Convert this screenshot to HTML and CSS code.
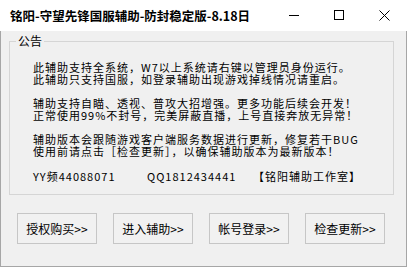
FILE: index.html
```html
<!DOCTYPE html>
<html lang="zh-CN">
<head>
    <meta charset="UTF-8">
    <title>铭阳-守望先锋国服辅助-防封稳定版-8.18日</title>
    <link rel="stylesheet" href="styles.css">
</head>
<body>
    <div class="window">
        <div class="titlebar">
            <span class="title">铭阳-守望先锋国服辅助-防封稳定版-8.18日</span>
            <div class="controls">
                <span class="ctl">
                    <svg width="11" height="11" viewBox="0 0 11 11"><path d="M0 5.5h10" stroke="#000" stroke-width="1"/></svg>
                </span>
                <span class="ctl">
                    <svg width="11" height="11" viewBox="0 0 11 11"><rect x="0.5" y="0.5" width="9" height="9" fill="none" stroke="#000" stroke-width="1"/></svg>
                </span>
                <span class="ctl">
                    <svg width="11" height="11" viewBox="0 0 11 11"><path d="M0.5 0.5l10 10M10.5 0.5l-10 10" stroke="#000" stroke-width="1"/></svg>
                </span>
            </div>
        </div>
        <div class="client">
            <fieldset class="notice">
                <legend>公告</legend>
                <div class="notice-body">
                    <p>此辅助支持全系统，W7以上系统请右键以管理员身份运行。<br>此辅助只支持国服，如登录辅助出现游戏掉线情况请重启。</p>
                    <p>辅助支持自瞄、透视、普攻大招增强。更多功能后续会开发！<br>正常使用99%不封号，完美屏蔽直播，上号直接奔放无异常！</p>
                    <p>辅助版本会跟随游戏客户端服务数据进行更新，修复若干BUG<br>使用前请点击［检查更新］，以确保辅助版本为最新版本！</p>
                    <div class="contact">
                        <span class="yy">YY频44088071</span>
                        <span class="qq">QQ1812434441</span>
                        <span class="studio">【铭阳辅助工作室】</span>
                    </div>
                </div>
            </fieldset>
            <div class="actions">
                <button class="btn">授权购买&gt;&gt;</button>
                <button class="btn">进入辅助&gt;&gt;</button>
                <button class="btn">帐号登录&gt;&gt;</button>
                <button class="btn">检查更新&gt;&gt;</button>
            </div>
        </div>
    </div>
</body>
</html>
```

FILE: styles.css
```css
* {
    box-sizing: border-box;
}
body {
    margin: 0;
    font-family: "Noto Sans CJK SC", "Noto Sans", sans-serif;
    color: #000;
}
.window {
    width: 407px;
    height: 267px;
    display: flex;
    flex-direction: column;
    background: #fff;
}
.titlebar {
    height: 31px;
    display: flex;
    align-items: center;
    background: #fff;
}
.titlebar .title {
    padding-left: 10px;
    font-size: 12.5px;
    font-weight: bold;
    line-height: 15px;
    flex: 1;
}
.titlebar .controls {
    display: flex;
    align-items: center;
    height: 100%;
}
.titlebar .ctl {
    width: 45px;
    height: 100%;
    display: flex;
    align-items: center;
    justify-content: center;
}
.titlebar .ctl svg {
    display: block;
}
.client {
    flex: 1;
    background: #f0f0f0;
    border: 1px solid #a6a6a6;
    border-top: none;
    display: flex;
    flex-direction: column;
}
.notice {
    margin: 4px 12px 0 8px;
    padding: 0 0 12px 6px;
    border: 1px solid #d5d5d5;
    min-width: 0;
}
.notice legend {
    padding: 0 2px;
    font-size: 12px;
    line-height: 12px;
}
.notice-body {
    margin: 14px 0 0 17px;
    font-size: 11px;
    letter-spacing: 1px;
    line-height: 12px;
    white-space: nowrap;
}
.notice-body p {
    margin: 0 0 12px;
}
.contact {
    display: flex;
    margin-top: 13px;
}
.contact .yy {
    width: 114px;
}
.contact .qq {
    width: 106px;
}
.actions {
    display: flex;
    gap: 16px;
    margin: 18px 0 0 16px;
}
.btn {
    width: 80px;
    height: 31px;
    padding: 0;
    font-family: inherit;
    font-size: 12px;
    color: #000;
    background: #f1f1f1;
    border: 1px solid #c6c6c6;
    border-radius: 0;
}
```
